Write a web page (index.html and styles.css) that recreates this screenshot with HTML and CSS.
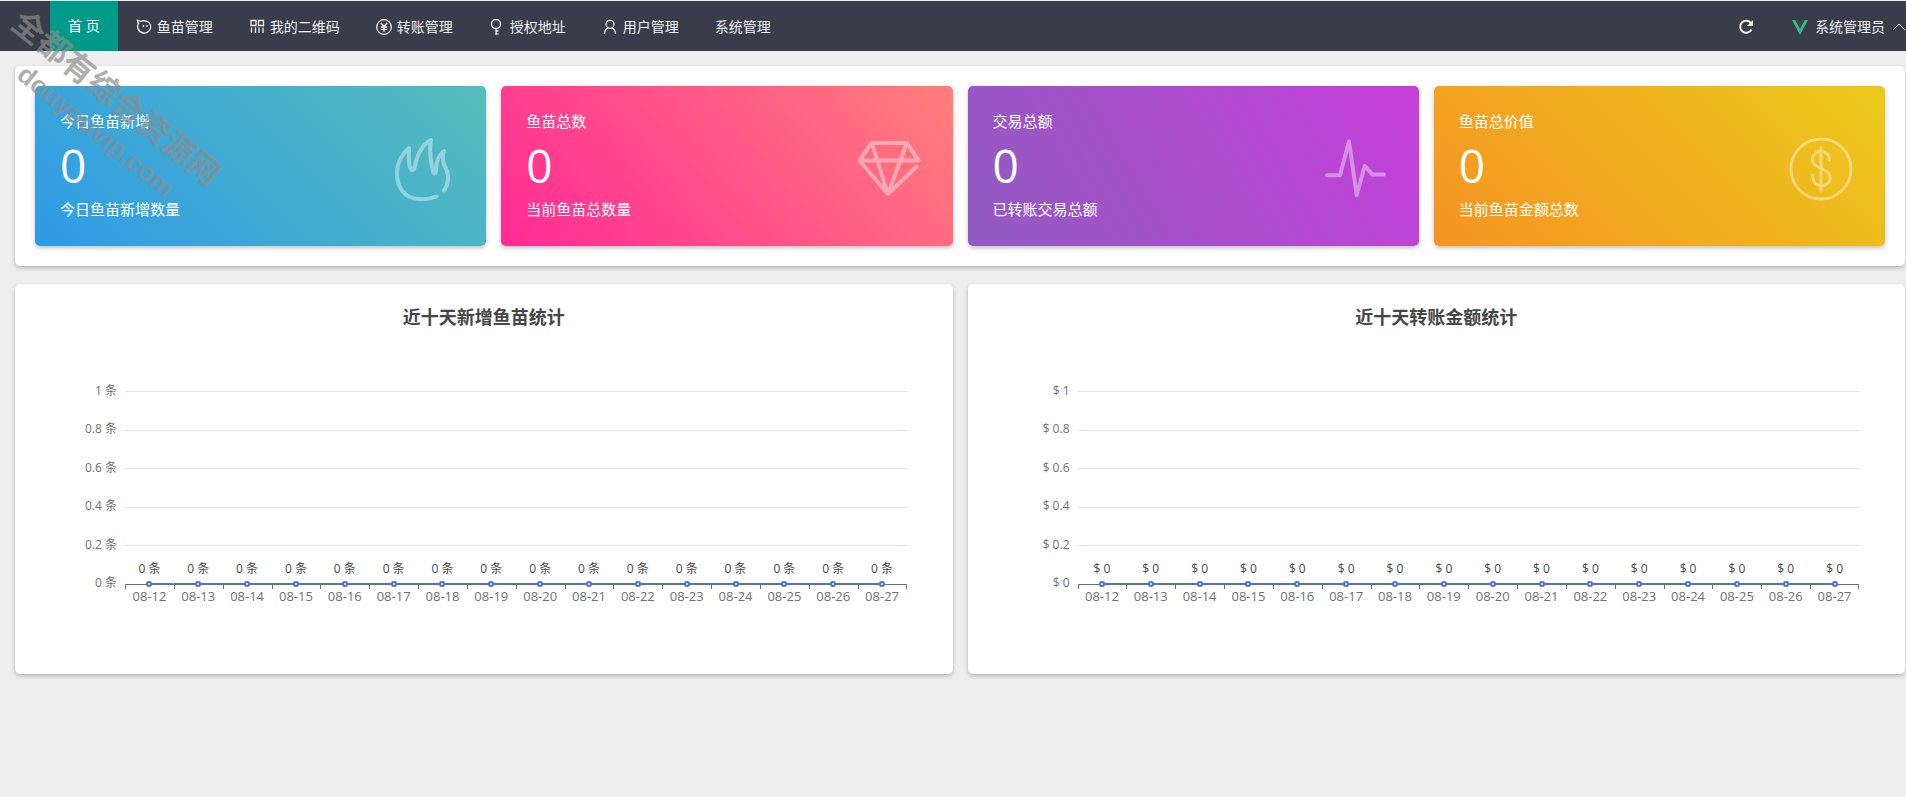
FILE: index.html
```html
<!DOCTYPE html>
<html lang="zh-CN">
<head>
<meta charset="utf-8">
<title>首页</title>
<link rel="stylesheet" href="styles.css">
</head>
<body>
<header class="topbar">
  <nav class="menu">
    <a class="menu-item active" href="#">首 页</a>
    <a class="menu-item" href="#"><svg class="icon" viewBox="0 0 16 16"><path d="M3 3.600A6.500 6.500 0 1 0 14.200 5.200C12.600 2 8 .8 5 2.500L1.500 1.200L2.200 5"/><path d="M7.500 6v2M11 6v2"/></svg>鱼苗管理</a>
    <a class="menu-item" href="#"><svg class="icon" viewBox="0 0 16 16"><path d="M2 1.500h5v5H2zM9.500 1.500h5v5h-5zM2.500 8.500V14M6.500 8.500V14M10 8.500V14M14 8.500V14"/></svg>我的二维码</a>
    <a class="menu-item" href="#"><svg class="icon" viewBox="0 0 16 16"><circle cx="8" cy="8" r="7.300"/><path d="M5 4l3 3.700L11 4M8 7.700V13M4.800 8h6.400M4.800 10.300h6.400"/></svg>转账管理</a>
    <a class="menu-item" href="#"><svg class="icon" viewBox="0 0 16 16"><circle cx="7" cy="5" r="4.500"/><path d="M7 9.500V16M7 12h2.500M7 14.800h2.500"/></svg>授权地址</a>
    <a class="menu-item" href="#"><svg class="icon" viewBox="0 0 16 16"><circle cx="8" cy="5.300" r="4"/><path d="M2.500 15c.2-3.500 1.500-5.500 3.800-6.200M9.700 8.800c2.300.7 3.600 2.700 3.800 6.200"/></svg>用户管理</a>
    <a class="menu-item" href="#">系统管理</a>
  </nav>
  <div class="tools">
    <button class="tool" type="button" aria-label="刷新"><svg class="icon refresh" viewBox="0 0 16 16"><path d="M13 4.200A6 6 0 1 0 13.500 10.500"/><path class="solid" d="M15 1v6H9z"/></svg></button>
    <button class="tool user" type="button"><svg class="logo" viewBox="0 0 16 16"><path fill="#41b883" d="M0 1h3.300L8 9.500 12.700 1H16L8 16z"/><path fill="#35495e" d="M3.300 1h3L8 4.200 9.700 1h3L8 9.500z"/></svg>系统管理员<svg class="caret" viewBox="0 0 14 14"><path d="M1 10l6-6 6 6"/></svg></button>
  </div>
</header>

<main class="page">
  <section class="card tiles">
    <article class="tile blue">
      <div><p>今日鱼苗新增</p><strong>0</strong><p>今日鱼苗新增数量</p></div>
      <svg class="tile-icon" viewBox="0 0 64 64"><path d="M46.500 59.500C40 62 34 62.500 28 62C14 61 7 50 7 36C7 25 13 16 19 11C19 18 18 24 20 30C21 34 24 34 25 29C27 18 32 8 41 3C39 14 41 26 43 34C44 38 46 37 46 33C46 25 49 18 54 14C51 22 54 28 57 34C59 41 58 48 54 53.500"/></svg>
    </article>
    <article class="tile pink">
      <div><p>鱼苗总数</p><strong>0</strong><p>当前鱼苗总数量</p></div>
      <svg class="tile-icon" viewBox="0 0 64 64"><path d="M59.500 29.700L31 57L2.500 23.500L14.800 6H49.800L61.500 23.500H2.500M14.800 6L31 57L49.800 6"/></svg>
    </article>
    <article class="tile purple">
      <div><p>交易总额</p><strong>0</strong><p>已转账交易总额</p></div>
      <svg class="tile-icon" viewBox="0 0 64 64"><path d="M4 38.300H17L26 4.500L33.700 58L41.700 29L49.300 37.500H61"/></svg>
    </article>
    <article class="tile orange">
      <div><p>鱼苗总价值</p><strong>0</strong><p>当前鱼苗金额总数</p></div>
      <svg class="tile-icon thin" viewBox="0 0 64 64"><path d="M62 32A30 30 0 1 1 2 32A30 30 0 1 1 62 32M32 10V54M40.500 23C40.500 11.500 23.500 11.500 23.500 22.500C23.500 32.500 41 30.500 41 40.500C41 52 23.500 52 23.500 38"/></svg>
    </article>
  </section>

  <div class="charts">
    <section class="card chart" data-prefix="" data-suffix=" 条"><h2>近十天新增鱼苗统计</h2></section>
    <section class="card chart" data-prefix="$ " data-suffix=""><h2>近十天转账金额统计</h2></section>
  </div>
</main>

<div class="watermark" aria-hidden="true">全都有综合资源网<br><span>douyouvip.com</span></div>
<script src="charts.js"></script>
</body>
</html>
```

FILE: charts.js
```js
const levels = [1, 0.8, 0.6, 0.4, 0.2, 0];
const points = Array.from({ length: 16 }, (_, i) => ({ date: `08-${12 + i}`, value: 0 }));

document.querySelectorAll('.chart').forEach((chart) => {
  const format = (n) => chart.dataset.prefix + n + chart.dataset.suffix;
  const scale = levels.map((n) => `<span>${format(n)}</span>`).join('');
  const lines = '<i></i>'.repeat(levels.length - 1);
  const series = points.map((p) => `<div><b>${format(p.value)}</b><i></i></div>`).join('');
  const dates = points.map((p) => `<span>${p.date}</span>`).join('');
  chart.insertAdjacentHTML('beforeend', `
    <div class="plot">
      <div class="scale">${scale}</div>
      <div class="lines">${lines}</div>
      <div class="dates">${dates}</div>
      <div class="series">${series}</div>
    </div>`);
});
```

FILE: styles.css
```css
* { box-sizing: border-box; }
body {
  margin: 0;
  min-height: 100vh;
  border-top: 1px solid #eee;
  background: #eee;
  overflow-x: hidden;
  font: 14px/20px "Open Sans", "Noto Sans CJK SC", sans-serif;
}
h2, p { margin: 0; }
svg { fill: none; stroke: currentColor; flex: none; }

.topbar {
  display: flex;
  justify-content: space-between;
  height: 50px;
  padding-left: 50px;
  background: #393d49;
  color: #f0f0f0;
}
.menu, .tools { display: flex; }
.menu-item, .tool {
  display: flex;
  align-items: center;
  gap: 5px;
  padding: 2px 18px 0;
  border: 0;
  background: none;
  color: inherit;
  font: inherit;
  white-space: nowrap;
  text-decoration: none;
}
.menu-item.active {
  padding-top: 0;
  background: #009a88;
  color: #fff;
}
.icon, .logo { width: 16px; height: 16px; }
.icon { stroke-width: 1.3; }
.icon.refresh { stroke-width: 2; }
.solid { fill: currentColor; stroke: none; }
.logo { stroke: none; }
.tool.user { gap: 7px; padding-left: 20px; padding-right: 0; }
.caret { width: 14px; height: 14px; }

.page {
  display: grid;
  gap: 18px;
  padding: 15px 1px 15px 15px;
}
.card {
  border-radius: 5px;
  background: #fff;
  box-shadow: 0 2px 4px rgba(0, 0, 0, .25);
}
.tiles {
  display: grid;
  grid-template-columns: repeat(4, 1fr);
  gap: 15px;
  padding: 20px;
}
.tile {
  display: flex;
  align-items: center;
  justify-content: space-between;
  padding: 23px 32px 25px 25px;
  border-radius: 5px;
  box-shadow: 0 2px 4px rgba(0, 0, 0, .25);
  color: #fff;
  font-size: 15px;
  line-height: 24px;
}
.tile strong {
  display: block;
  font-size: 46px;
  font-weight: 400;
  line-height: 64px;
}
.blue { background: linear-gradient(45deg, #2e9be6, #56bdbb); }
.pink { background: linear-gradient(50deg, #ff2a96, #ff7f7b); }
.purple { background: linear-gradient(60deg, #905cc0, #c63fd9); }
.orange { background: linear-gradient(45deg, #f59423, #ebca1b); }
.tile-icon {
  width: 64px;
  height: 64px;
  margin-top: 8px;
  opacity: .4;
  stroke-width: 4;
  stroke-linecap: round;
  stroke-linejoin: round;
}
.thin { stroke-width: 3; }

.charts {
  display: grid;
  grid-template-columns: 1fr 1fr;
  gap: 15px;
}
.chart { padding: 20px 46px 69px 0; }
.chart h2 {
  padding-left: 46px;
  color: #464646;
  font-size: 18px;
  line-height: 26px;
  text-align: center;
}
.plot {
  display: grid;
  grid-template-columns: 102px 1fr;
  grid-template-rows: 193px auto;
  column-gap: 8px;
  padding-top: 61px;
  color: #6e7079;
  font-size: 12px;
  line-height: 18px;
}
.scale {
  display: flex;
  flex-direction: column;
  justify-content: space-between;
  margin: -9px 0 -8px;
  text-align: right;
}
.lines {
  grid-area: 1 / 2;
  display: grid;
  grid-template-rows: repeat(5, 1fr);
}
.lines i { border-top: 1px solid #e0e6f1; }
.series, .dates {
  grid-column: 2;
  display: grid;
  grid-template-columns: repeat(16, 1fr);
  text-align: center;
}
.series {
  grid-row: 1;
  align-self: end;
  margin-bottom: -3px;
}
.series div {
  display: grid;
  justify-items: center;
  row-gap: 3px;
  background: linear-gradient(#5470c6, #5470c6) 0 23px / 100% 2px no-repeat;
}
.series div:first-child { background-size: 50% 2px; background-position: 100% 23px; }
.series div:last-child { background-size: 50% 2px; }
.series b { color: #464646; font-weight: 400; }
.series i {
  width: 6px;
  height: 6px;
  border: 2px solid #5470c6;
  border-radius: 50%;
  background: #fff;
}
.dates {
  grid-row: 2;
  border-top: 1px solid #6e7079;
  background: linear-gradient(#6e7079, #6e7079) 100% 0 / 1px 4px no-repeat;
  font-size: 13px;
}
.dates span {
  padding-top: 2px;
  background: linear-gradient(#6e7079, #6e7079) 0 0 / 1px 4px no-repeat;
}

.watermark {
  position: absolute;
  left: -36px;
  top: 76px;
  width: 280px;
  color: rgba(140, 140, 140, .7);
  font: bold 32px/36px "Liberation Sans", "Noto Sans CJK SC", sans-serif;
  text-align: center;
  white-space: nowrap;
  transform: rotate(39deg);
  pointer-events: none;
}
.watermark span { padding-left: 10px; font-size: 26px; }
```
